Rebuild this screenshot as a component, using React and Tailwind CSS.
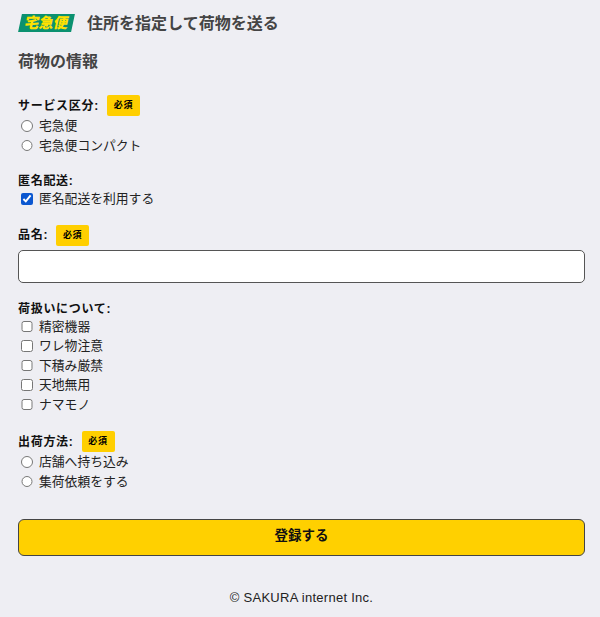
function Req() {
  return (
    <span className="ml-[8px] inline-flex h-[21px] w-[33px] items-center justify-center rounded-[2px] bg-[#ffcf00] text-[9px] font-bold text-black">
      必須
    </span>
  );
}

function Label({ children, req }) {
  return (
    <div className="flex h-[21px] items-center text-[12px] font-bold leading-[21px] tracking-[0.7px] text-[#111]">
      <span className="pt-[1px]">{children}</span>
      {req && <Req />}
    </div>
  );
}

function Opt({ type = "radio", name, children, checked }) {
  return (
    <label className="flex h-[19.5px] items-center text-[12.8px] text-[#222]">
      <input
        type={type}
        name={name}
        defaultChecked={checked}
        className="ml-[3px] mr-[6.5px] h-[11.5px] w-[11.5px] accent-[#0b57d0]"
      />
      <span>{children}</span>
    </label>
  );
}

export default function App() {
  return (
    <div className="flex h-[617px] w-[600px] flex-col overflow-hidden bg-[#eeeef3] pl-[18px] pr-[15px] font-['Liberation_Sans','Noto_Sans_CJK_JP',sans-serif]">
      <header className="flex h-[46px] items-center">
        <div className="mb-[1px] ml-[2px] flex h-[18px] w-[53px] -skew-x-[12deg] items-center justify-center bg-[#0b9170]">
          <span className="text-[14.5px] font-black leading-none text-[#ffe100]">宅急便</span>
        </div>
        <h1 className="ml-[14px] pt-[1px] text-[16px] font-bold tracking-[0.03px] text-[#444]">住所を指定して荷物を送る</h1>
      </header>
      <h2 className="mt-[4px] h-[24px] pt-[1px] text-[16px] font-bold leading-[22px] text-[#444]">荷物の情報</h2>

      <section className="mt-[21px]">
        <Label req>サービス区分:</Label>
        <Opt name="s">宅急便</Opt>
        <Opt name="s">宅急便コンパクト</Opt>
      </section>

      <section className="mt-[17px]">
        <div className="flex h-[17px] items-center pt-[1px] text-[12px] font-bold tracking-[0.7px] text-[#111]">匿名配送:</div>
        <Opt type="checkbox" checked>匿名配送を利用する</Opt>
      </section>

      <section className="mt-[16px]">
        <Label req>品名:</Label>
        <input
          type="text"
          className="mt-[4px] block h-[33px] w-full rounded-[5px] border border-[#555] bg-white px-2 text-[13px] outline-none"
        />
      </section>

      <section className="mt-[17px]">
        <div className="flex h-[17px] items-center pt-[1px] text-[12px] font-bold tracking-[0.7px] text-[#111]">荷扱いについて:</div>
        <Opt type="checkbox">精密機器</Opt>
        <Opt type="checkbox">ワレ物注意</Opt>
        <Opt type="checkbox">下積み厳禁</Opt>
        <Opt type="checkbox">天地無用</Opt>
        <Opt type="checkbox">ナマモノ</Opt>
      </section>

      <section className="mt-[17px]">
        <Label req>出荷方法:</Label>
        <Opt name="m">店舗へ持ち込み</Opt>
        <Opt name="m">集荷依頼をする</Opt>
      </section>

      <button className="mt-[28px] h-[36.5px] w-full rounded-[6px] border border-[#444] bg-[#ffd000] pb-[3px] text-[13.5px] font-bold text-[#111]">
        登録する
      </button>

      <footer className="mt-[32px] text-center text-[13px] leading-[20px] tracking-[0.27px] text-[#222]">© SAKURA internet Inc.</footer>
    </div>
  );
}
